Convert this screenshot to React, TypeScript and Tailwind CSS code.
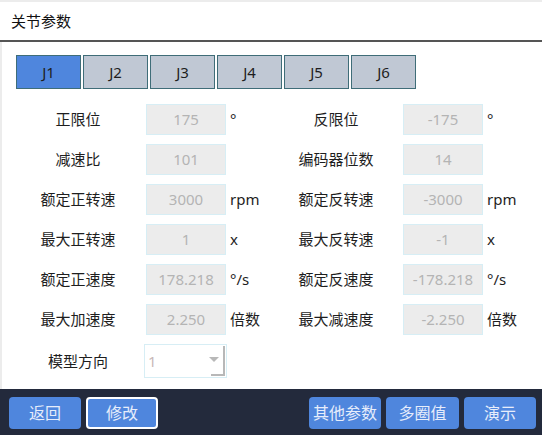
import * as React from "react";

interface ParamRow {
  leftLabel: string;
  leftValue: string;
  leftUnit: string;
  rightLabel: string;
  rightValue: string;
  rightUnit: string;
}

const rows: ParamRow[] = [
  { leftLabel: "正限位", leftValue: "175", leftUnit: "°", rightLabel: "反限位", rightValue: "-175", rightUnit: "°" },
  { leftLabel: "减速比", leftValue: "101", leftUnit: "", rightLabel: "编码器位数", rightValue: "14", rightUnit: "" },
  { leftLabel: "额定正转速", leftValue: "3000", leftUnit: "rpm", rightLabel: "额定反转速", rightValue: "-3000", rightUnit: "rpm" },
  { leftLabel: "最大正转速", leftValue: "1", leftUnit: "x", rightLabel: "最大反转速", rightValue: "-1", rightUnit: "x" },
  { leftLabel: "额定正速度", leftValue: "178.218", leftUnit: "°/s", rightLabel: "额定反速度", rightValue: "-178.218", rightUnit: "°/s" },
  { leftLabel: "最大加速度", leftValue: "2.250", leftUnit: "倍数", rightLabel: "最大减速度", rightValue: "-2.250", rightUnit: "倍数" },
];

const tabs = ["J1", "J2", "J3", "J4", "J5", "J6"];

function ValueBox({ value }: { value: string }) {
  return (
    <div className="w-[80px] h-[31px] flex items-center justify-center bg-[#ececec] border border-[#d7eef5] text-[#b4b4b4]">
      {value}
    </div>
  );
}

export default function App() {
  return (
    <div
      className="w-[542px] h-[435px] flex flex-col bg-white text-[15px] text-[#1e1e1e]"
      style={{ fontFamily: '"Noto Sans", "Noto Sans CJK SC", sans-serif' }}
    >
      <div className="h-[2px] bg-[#ececec]" />
      <div className="h-[38px] flex items-center pl-[11px] text-[15px] text-[#111]">关节参数</div>
      <div className="h-[2px] bg-[#555555]" />

      <div className="flex-1 border-l-2 border-[#ececec] pt-[13px]">
        <div className="flex gap-[2px] pl-[14px]">
          {tabs.map((t, i) => (
            <div
              key={t}
              className={`w-[65px] h-[34px] flex items-center justify-center text-[15px] border border-[#3f6d78] ${i === 0 ? "bg-[#4f86dd]" : "bg-[#c0c8d4]"}`}
            >
              {t}
            </div>
          ))}
        </div>

        <div className="mt-[15px] flex flex-col gap-[9px]">
          {rows.map((r) => (
            <div key={r.leftLabel} className="flex items-center h-[31px] pl-[14px]">
              <div className="w-[124px] text-center">{r.leftLabel}</div>
              <div className="w-[6px]" />
              <ValueBox value={r.leftValue} />
              <div className="w-[48px] pl-[4px]">{r.leftUnit}</div>
              <div className="w-[124px] text-center">{r.rightLabel}</div>
              <div className="w-[5px]" />
              <ValueBox value={r.rightValue} />
              <div className="pl-[4px]">{r.rightUnit}</div>
            </div>
          ))}
          <div className="flex items-center h-[34px] pl-[14px]">
            <div className="w-[124px] text-center">模型方向</div>
            <div className="w-[4px]" />
            <div className="relative w-[83px] h-[34px] border border-[#d7eef5] bg-white flex items-center pl-[3px] text-[#c8b8b8]">
              1
              <div className="absolute right-[1px] top-[1px] bottom-[1px] w-[2px] bg-[#b8b8b8]" />
              <div className="absolute right-[1px] bottom-[1px] w-[14px] h-[2px] bg-[#b8b8b8]" />
              <div className="absolute right-[7px] top-[12px] w-0 h-0 border-l-[5px] border-r-[5px] border-t-[5px] border-l-transparent border-r-transparent border-t-[#b8b8b8]" />
            </div>
          </div>
        </div>
      </div>

      <div className="h-[46px] bg-[#232a3c] flex items-start pt-[8px] px-[9px] text-[16px] text-[#e6edfb]">
        <div className="w-[72px] h-[32px] rounded-[4px] bg-[#4f86dd] flex items-center justify-center">返回</div>
        <div className="ml-[5px] w-[72px] h-[32px] rounded-[4px] bg-[#4f86dd] border-2 border-white flex items-center justify-center">修改</div>
        <div className="flex-1" />
        <div className="w-[72px] h-[32px] rounded-[4px] bg-[#4f86dd] flex items-center justify-center">其他参数</div>
        <div className="ml-[5px] w-[73px] h-[32px] rounded-[4px] bg-[#4f86dd] flex items-center justify-center">多圈值</div>
        <div className="ml-[5px] w-[72px] h-[32px] rounded-[4px] bg-[#4f86dd] flex items-center justify-center mr-[-3px]">演示</div>
      </div>
    </div>
  );
}
